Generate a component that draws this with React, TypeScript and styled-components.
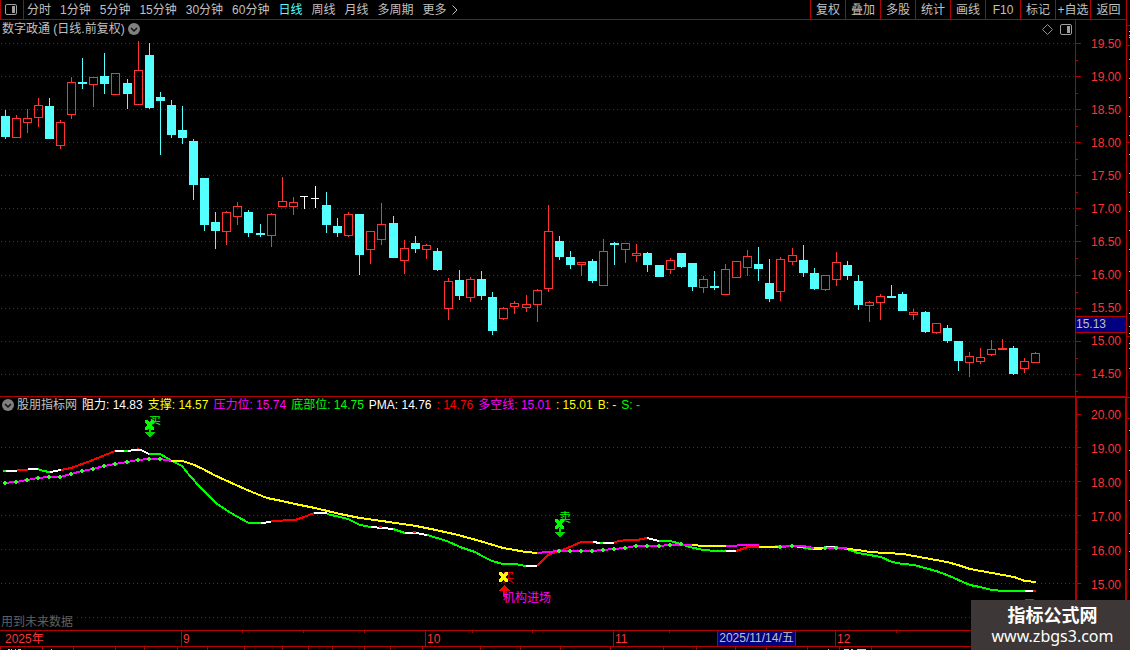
import React from "react";
import styled, { createGlobalStyle } from "styled-components";

const RED = "#b40000";
const HOT = "#ff3232";
const CYAN = "#54ffff";
const GREY = "#c0c0c0";
const LIME = "#00ff00";
const MAGENTA = "#ff00ff";
const YELLOW = "#ffff00";

const Global = createGlobalStyle`
  * { box-sizing: border-box; }
  body {
    margin: 0;
    background: #000;
    color: ${GREY};
    font: 12px/16px "Liberation Sans", "Noto Sans CJK SC", sans-serif;
    overflow: hidden;
  }
  button { font: inherit; color: inherit; background: none; border: 0; padding: 0; margin: 0; cursor: pointer; white-space: nowrap; }
  svg { display: block; }
`;

const Page = styled.div`
  position: relative;
  display: grid;
  grid-template-columns: minmax(0, 1fr) 4px;
  min-height: 100vh;
  background: #000;
`;

const Main = styled.main`
  display: flex;
  flex-direction: column;
  min-width: 0;
`;

const SideStrip = styled.aside`
  border-left: 1px solid ${RED};
  overflow: hidden;
`;

const Toolbar = styled.header`
  display: flex;
  height: 20px;
  border-bottom: 1px solid ${RED};
`;

const PanelToggle = styled.button`
  display: flex;
  align-items: center;
  width: 24px;
  padding-left: 4px;
  border-left: 1px solid ${RED};
  border-right: 1px solid ${RED};
`;

const Periods = styled.nav`
  display: flex;
  flex: 1;
  align-items: center;
  gap: 9px;
  padding-left: 3px;
`;

const Period = styled.button<{ $active?: boolean }>`
  display: flex;
  align-items: center;
  gap: 4px;
  height: 18px;
  color: ${(p) => (p.$active ? CYAN : GREY)};
`;

const Actions = styled.nav`
  display: flex;
`;

const Action = styled.button`
  width: 35px;
  height: 19px;
  border-left: 1px solid ${RED};

  &:last-child { width: 36px; }
`;

const Panel = styled.section`
  display: grid;
  grid-template-columns: minmax(0, 1fr) 51px;
  border-bottom: 1px solid ${RED};
`;

const Plot = styled.div`
  position: relative;
  min-width: 0;
  overflow: hidden;
`;

const TitleRow = styled.div`
  display: flex;
  align-items: center;
  gap: 3px;
  height: 20px;
  padding: 0 3px 2px 2px;
`;

const Title = styled.h1`
  margin: 0;
  font: inherit;
`;

const IconButton = styled.button`
  display: flex;
`;

const Tools = styled.div`
  display: flex;
  align-items: center;
  gap: 7px;
  margin-left: auto;
`;

const Legend = styled.div`
  display: flex;
  align-items: center;
  gap: 5px;
  height: 17px;
  padding: 0 0 2px 2px;
  white-space: nowrap;
`;

const LegendName = styled.span`
  margin-left: -2px;
`;

const LegendItem = styled.span<{ $color: string }>`
  color: ${(p) => p.$color};
`;

const Axis = styled.div<{ $thick?: boolean }>`
  position: relative;
  display: grid;
  border-left: ${(p) => (p.$thick ? 2 : 1)}px solid ${RED};
  border-right: ${(p) => (p.$thick ? 1 : 0)}px solid ${RED};
  border-top: ${(p) => (p.$thick ? 1 : 0)}px solid ${RED};
  color: ${HOT};

  > * { grid-area: 1 / 1; }
`;

const PriceLabels = styled.div`
  display: flex;
  flex-direction: column;
  padding: 7px 5px 5px 0;
  text-align: right;
`;

const PriceLabel = styled.span`
  display: flex;
  flex: 1;
  align-items: center;
  justify-content: flex-end;
`;

const LevelLabels = styled.div`
  display: grid;
  grid-auto-rows: 34px;
  padding-right: 4px;
  align-items: center;
  justify-items: end;
`;

const PriceTag = styled.div`
  position: absolute;
  top: 296px;
  left: 0;
  right: 0;
  height: 17px;
  border: solid ${RED};
  border-width: 1px 0;
  background: #000080;
  color: ${GREY};
  line-height: 15px;
`;

const Notice = styled.div`
  position: absolute;
  left: 0;
  bottom: 0;
  padding: 0 1px;
  background: #000;
  color: #606060;
`;

const TimeAxis = styled.div`
  position: relative;
  display: flex;
  height: 16px;
  border-bottom: 1px solid ${RED};
  color: ${HOT};
  line-height: 16px;
`;

const Month = styled.div<{ $w?: number }>`
  flex: ${(p) => (p.$w ? `0 0 ${p.$w}px` : "1")};
  padding-left: 1px;
  border-left: 1px solid ${RED};

  &:first-child { border-left: 0; padding-left: 5px; }
`;

const DateTag = styled.div`
  position: absolute;
  left: 717px;
  top: 0;
  width: 79px;
  height: 15px;
  border: solid ${RED};
  border-width: 0 1px;
  background: #000080;
  color: ${GREY};
  line-height: 15px;
  text-align: center;
  white-space: nowrap;
`;

const TickOverlay = styled.svg`
  position: absolute;
  left: 0;
  top: 0;
`;

const SiteBadge = styled.a`
  position: absolute;
  right: 0;
  bottom: 0;
  width: 159px;
  height: 50px;
  padding: 1px 0 0 4px;
  background: #3d3737;
  color: #fff;
  text-align: center;
  text-decoration: none;
`;

const BadgeName = styled.div`
  font: bold 18px/26px "Noto Sans CJK SC", sans-serif;
`;

const BadgeUrl = styled.div`
  font: 16px/18px "Noto Sans", "Open Sans", sans-serif;
`;

// left, high, body top, body bottom, low, kind (u = rise, d = fall)
type Candle = [number, number, number, number, number, "u" | "d"];
const candles: Candle[] = [
  [1, 110, 116, 137, 139, "d"], [12, 115, 118, 138, 138, "u"], [23, 109, 118, 123, 133, "u"],
  [34, 98, 105, 118, 127, "u"], [45, 98, 106, 139, 139, "d"], [56, 120, 122, 146, 149, "u"],
  [67, 77, 82, 115, 119, "u"], [78, 58, 82, 84, 89, "d"], [89, 77, 77, 85, 107, "u"],
  [100, 53, 76, 84, 94, "d"], [111, 73, 73, 95, 95, "u"], [123, 79, 83, 94, 109, "d"],
  [134, 41, 70, 105, 105, "u"], [145, 43, 55, 108, 109, "d"], [156, 92, 97, 101, 155, "d"],
  [167, 100, 105, 135, 138, "d"], [178, 106, 130, 138, 144, "d"], [189, 139, 141, 185, 200, "d"],
  [200, 178, 178, 225, 231, "d"], [211, 212, 222, 231, 249, "d"], [222, 211, 212, 232, 245, "u"],
  [233, 202, 206, 217, 225, "u"], [244, 210, 212, 233, 237, "d"], [256, 224, 233, 235, 237, "d"],
  [267, 213, 214, 236, 247, "u"], [278, 177, 201, 207, 207, "u"], [289, 197, 202, 207, 215, "u"],
  [322, 192, 205, 225, 233, "d"], [333, 218, 226, 233, 237, "d"], [344, 212, 214, 236, 237, "u"],
  [355, 214, 214, 255, 275, "d"], [366, 231, 231, 250, 264, "u"], [377, 203, 224, 240, 245, "u"],
  [389, 216, 223, 258, 258, "d"], [400, 240, 248, 261, 274, "u"], [411, 236, 243, 249, 253, "d"],
  [422, 244, 245, 250, 259, "u"], [433, 248, 251, 270, 271, "d"], [444, 278, 281, 309, 320, "u"],
  [455, 270, 280, 296, 300, "d"], [466, 277, 279, 298, 302, "u"], [477, 271, 279, 296, 300, "d"],
  [488, 292, 297, 331, 335, "d"], [499, 307, 308, 319, 320, "u"], [510, 301, 303, 307, 314, "u"],
  [522, 295, 304, 308, 312, "u"], [533, 289, 290, 305, 322, "u"], [544, 205, 231, 289, 292, "u"],
  [555, 236, 241, 257, 260, "d"], [566, 251, 257, 265, 269, "d"], [577, 262, 262, 265, 276, "u"],
  [588, 259, 261, 281, 283, "d"], [599, 239, 251, 286, 286, "u"], [610, 242, 243, 245, 265, "d"],
  [621, 243, 243, 250, 263, "u"], [632, 244, 253, 256, 262, "u"], [643, 252, 253, 265, 272, "d"],
  [655, 265, 265, 277, 277, "d"], [666, 258, 260, 270, 274, "u"], [677, 253, 253, 267, 268, "d"],
  [688, 263, 263, 287, 291, "d"], [699, 276, 279, 288, 293, "u"], [710, 271, 286, 288, 290, "d"],
  [721, 264, 269, 295, 295, "u"], [732, 261, 261, 278, 278, "u"], [743, 250, 256, 268, 276, "u"],
  [754, 247, 264, 269, 281, "d"], [765, 259, 283, 299, 302, "d"], [776, 257, 259, 292, 301, "u"],
  [788, 248, 255, 262, 265, "u"], [799, 245, 260, 273, 277, "d"], [810, 268, 273, 289, 290, "d"],
  [821, 275, 275, 290, 291, "u"], [832, 252, 262, 280, 286, "u"], [843, 261, 265, 276, 280, "d"],
  [854, 275, 281, 305, 310, "d"], [865, 301, 302, 306, 322, "u"], [876, 294, 296, 303, 320, "u"],
  [887, 285, 296, 298, 298, "d"], [898, 292, 294, 311, 311, "d"], [909, 309, 312, 315, 320, "u"],
  [921, 311, 312, 332, 333, "d"], [932, 323, 323, 333, 334, "u"], [943, 325, 328, 341, 343, "d"],
  [954, 341, 341, 361, 371, "d"], [965, 352, 356, 363, 377, "u"], [976, 348, 357, 362, 364, "u"],
  [987, 340, 349, 355, 356, "u"], [998, 339, 348, 350, 350, "u"], [1009, 346, 348, 374, 375, "d"],
  [1020, 358, 361, 369, 373, "u"], [1031, 352, 353, 363, 363, "u"],
];

const priceGrid = [43, 76, 109, 142, 175, 208, 241, 275, 308, 341, 374];
const levelGrid = [447, 481, 515, 549, 583, 617];
const prices = ["19.50", "19.00", "18.50", "18.00", "17.50", "17.00", "16.50", "16.00", "15.50", "15.00", "14.50"];
const levels = ["20.00", "19.00", "18.00", "17.00", "16.00", "15.00"];

const trend: [string, string][] = [
  [LIME, "3,471 6,471"], ["#fff", "6,471 17,471"], ["red", "17,470 28,470"], ["#fff", "28,469 38,469"],
  [LIME, "38,469 43,471 50,472"], ["#fff", "50,472 61,470"],
  ["red", "61,470 71,468 82,464 93,460 105,455 115,451"],
  ["#fff", "115,451 124,451"], [LIME, "124,451 128,451"], ["#fff", "128,451 134,450 141,450 149,454"],
  [LIME, "149,454 160,454 172,461 182,466 190,476 200,487 216,503 226,510 236,516 249,523 261,523"],
  ["#fff", "261,523 271,522"], ["red", "271,521 295,520 304,517 314,513"], ["#fff", "314,513 327,513"],
  [LIME, "327,514 340,517 348,519 360,525 371,527"], ["#fff", "371,527 393,529"], ["red", "379,527 382,527"],
  [LIME, "393,529 405,533"], ["#fff", "405,533 416,533 427,535"], ["red", "413,532 416,532"],
  [LIME, "427,535 447,541 460,547 475,552 482,556 492,561 503,564 515,564 526,566"],
  ["#fff", "526,566 537,566"],
  ["red", "537,566 548,555 559,551 570,547 581,542 593,542"],
  ["#fff", "593,542 600,543"], [LIME, "600,543 603,543"], ["#fff", "603,543 614,543"],
  ["red", "614,542 626,540 637,540 647,538"], ["#fff", "647,538 659,541"],
  [LIME, "659,541 670,541 681,544 690,547 703,550 716,551 726,551"], ["#fff", "726,551 736,551"],
  ["red", "736,551 748,547 759,547 770,547 780,546 792,546"], ["#fff", "797,547 803,547"],
  [LIME, "803,548 813,549"], ["#fff", "813,549 820,549 826,547 835,547"],
  [LIME, "835,547 847,549 858,553 881,557 892,562 903,564 914,565 936,571 947,575 970,585 980,587 992,590 1003,591 1025,591"],
  ["#fff", "1025,591 1033,591"], ["red", "1033,591 1036,591"],
];

const longLine: [string, string][] = [
  [MAGENTA, "3,483 16,482 27,480 38,478 49,477 60,477 71,474 82,471 93,469 104,466 115,464 127,462 138,460 149,459 160,459 172,461"],
  [YELLOW, "171,461 182,461 192,464 203,469 214,475 225,480 236,485 252,492 267,498 282,501 295,504 315,508 340,514 360,518 382,521 416,526 436,530 458,535 480,541 503,548 526,552 537,553"],
  [MAGENTA, "537,553 548,552 559,551 592,551 603,550 614,549 625,548 636,546 659,546 670,545 692,545"],
  [YELLOW, "692,545 704,546 726,546"], [MAGENTA, "726,546 748,545 759,545"], [YELLOW, "759,547 780,547"],
  [MAGENTA, "780,547 792,546 803,546 814,548"], [YELLOW, "814,548 825,548"], [MAGENTA, "825,548 847,548"],
  [YELLOW, "847,549 858,550 870,552 903,554 914,556 947,562 958,565 970,569 992,573 1014,577 1025,581 1036,582"],
];

const dots: [number, number][] = [
  [5, 483], [16, 482], [27, 480], [38, 478], [49, 477], [60, 477], [71, 474], [82, 471], [93, 469],
  [104, 466], [115, 464], [127, 462], [138, 460], [149, 459], [160, 459], [559, 551], [570, 551],
  [581, 551], [592, 551], [603, 550], [614, 549], [625, 548], [636, 546], [647, 546], [659, 546],
  [670, 545], [681, 544], [780, 547], [792, 546], [825, 548], [836, 548],
];

const periods = ["分时", "1分钟", "5分钟", "15分钟", "30分钟", "60分钟", "日线", "周线", "月线", "多周期"];
const actions = ["复权", "叠加", "多股", "统计", "画线", "F10", "标记", "+自选", "返回"];
const legend: [string, string][] = [
  ["阻力: 14.83", "#fff"], ["支撑: 14.57", YELLOW], ["压力位: 15.74", MAGENTA], ["底部位: 14.75", LIME],
  ["PMA: 14.76", "#fff"], [": 14.76", "red"], ["多空线: 15.01", MAGENTA], [": 15.01", YELLOW],
  ["B: -", YELLOW], ["S: -", LIME],
];

const SidebarIcon = () => (
  <svg width="12" height="11" viewBox="0 0 12 11" aria-hidden="true">
    <rect x="0.5" y="0.5" width="11" height="10" rx="1.5" fill="none" stroke="#a0a0a0" />
    <rect x="7" y="2" width="3" height="7" fill="#a0a0a0" />
  </svg>
);

const RoundChevron = () => (
  <svg width="12" height="12" viewBox="0 0 12 12" aria-hidden="true">
    <circle cx="6" cy="6" r="6" fill="#808080" />
    <path d="M3 5l3 3 3-3" fill="none" stroke="#111" strokeWidth="1.5" />
  </svg>
);

const GridLines = ({ ys }: { ys: number[] }) => (
  <g stroke={RED} strokeDasharray="1 3">
    {ys.map((y) => <line key={y} x1="1" x2="100%" y1={y + 0.5} y2={y + 0.5} />)}
  </g>
);

const CandleShape = ({ c: [x, high, top, bottom, low, kind] }: { c: Candle }) => {
  if (kind === "d")
    return (
      <g fill={CYAN}>
        <rect x={x + 4} y={high} width="1" height={low - high} />
        <rect x={x} y={top} width="9" height={bottom - top} />
      </g>
    );
  return (
    <g fill={HOT}>
      <rect x={x + 4} y={high} width="1" height={top - high} />
      <rect x={x + 4} y={bottom} width="1" height={low - bottom} />
      <rect x={x + 0.5} y={top + 0.5} width="8" height={bottom - top - 1} fill="none" stroke={HOT} />
    </g>
  );
};

const Cross = ({ x, y, color }: { x: number; y: number; color: string }) => (
  <g transform={`translate(${x} ${y})`} fill={color}>
    <path d="M0 0h3v1h1v1h1v-1h1v-1h3v3h-1v1h-1v2h1v1h1v3h-3v-1h-1v-1h-1v1h-1v1h-3v-3h1v-1h1v-2h-1v-1h-1z" />
  </g>
);

const DownArrow = ({ x, y }: { x: number; y: number }) => (
  <path d={`M${x + 4} ${y - 4}h2v4h4v1h-1v1h-1v1h-1v1h-1v1h-2v-1h-1v-1h-1v-1h-1v-1h-1v-1h4z`} fill="#00d800" />
);

export default function App() {
  return (
    <>
      <Global />
      <Page>
        <Main>
          <Toolbar>
            <PanelToggle aria-label="侧栏"><SidebarIcon /></PanelToggle>
            <Periods>
              {periods.map((p) => <Period key={p} $active={p === "日线"}>{p}</Period>)}
              <Period>
                更多
                <svg width="7" height="10" viewBox="0 0 7 10" aria-hidden="true">
                  <path d="M1.500 .5l4.500 4.500-4.500 4.500" fill="none" stroke={GREY} />
                </svg>
              </Period>
            </Periods>
            <Actions>
              {actions.map((a) => <Action key={a}>{a}</Action>)}
            </Actions>
          </Toolbar>

          <Panel>
            <Plot>
              <TitleRow>
                <Title>数字政通 (日线.前复权)</Title>
                <IconButton aria-label="展开"><RoundChevron /></IconButton>
                <Tools>
                  <IconButton aria-label="标记点">
                    <svg width="11" height="11" viewBox="0 0 11 11">
                      <path d="M5.500 .5l5 5-5 5-5-5z" fill="none" stroke="#909090" />
                    </svg>
                  </IconButton>
                  <IconButton aria-label="右侧栏"><SidebarIcon /></IconButton>
                </Tools>
              </TitleRow>
              <svg width="100%" height="356" shapeRendering="crispEdges" role="img" aria-label="日线">
                <g transform="translate(0 -40)">
                  <GridLines ys={priceGrid} />
                  {candles.map((c) => <CandleShape key={c[0]} c={c} />)}
                  <path d="M300 196h8v1h-3v12h-1v-12h-4zM315 186h1v12h3v1h-3v9h-1v-9h-4v-1h4z" fill="#fff" />
                </g>
              </svg>
            </Plot>
            <Axis>
              <svg width="8" height="376" shapeRendering="crispEdges" aria-hidden="true">
                {priceGrid.map((y) => (
                  <g key={y} fill={RED}>
                    <rect x="0" y={y - 20} width="5" height="1" />
                    <rect x="0" y={y - 3} width="2" height="1" />
                  </g>
                ))}
              </svg>
              <PriceLabels>{prices.map((p) => <PriceLabel key={p}>{p}</PriceLabel>)}</PriceLabels>
              <PriceTag>15.13</PriceTag>
            </Axis>
          </Panel>

          <Panel>
            <Plot>
              <Legend>
                <IconButton aria-label="展开指标"><RoundChevron /></IconButton>
                <LegendName>股朋指标网</LegendName>
                {legend.map(([text, color], i) => <LegendItem key={i} $color={color}>{text}</LegendItem>)}
              </Legend>
              <svg width="100%" height="216" shapeRendering="crispEdges" role="img" aria-label="指标">
                <g transform="translate(0 -414)">
                  <GridLines ys={levelGrid} />
                  <g fill="none" strokeWidth="2" strokeLinejoin="round">
                    {trend.map(([color, points], i) => <polyline key={i} points={points} stroke={color} />)}
                    {longLine.map(([color, points], i) => <polyline key={i} points={points} stroke={color} />)}
                  </g>
                  <g fill="#32ff32">
                    {dots.map(([x, y]) => (
                      <path key={x} d={`M${x - 1} ${y - 2}h2v1h1v2h-1v1h-2v-1h-1v-2h1z`} />
                    ))}
                  </g>
                  <rect x="137" y="448" width="2" height="1" fill="red" />
                  <text x="149" y="424" fontSize="12" fill={LIME}>卖</text>
                  <rect x="148" y="414" width="14" height="2" fill="#000" />
                  <Cross x={145} y={420} color={LIME} />
                  <DownArrow x={145} y={432} />
                  <text x="559" y="522" fontSize="12" fill={LIME}>卖</text>
                  <Cross x={555} y={519} color={LIME} />
                  <DownArrow x={555} y={532} />
                  <text x="502" y="582" fontSize="12" fill="red">买</text>
                  <Cross x={499} y={572} color={YELLOW} />
                  <path d="M503 585h2v1h1v1h1v1h1v1h1v1h1v1h-5v6h-2v-6h-4v-1h1v-1h1v-1h1v-1h1v-1h1z" fill="red" />
                  <text x="503" y="602" fontSize="12" fill={MAGENTA}>机构进场</text>
                  <rect x="1025" y="599" width="9" height="1" fill="red" />
                </g>
              </svg>
              <Notice>用到未来数据</Notice>
            </Plot>
            <Axis $thick>
              <svg width="8" height="230" shapeRendering="crispEdges" aria-hidden="true">
                {[414, ...levelGrid].map((y) => (
                  <g key={y} fill={RED}>
                    <rect x="0" y={y - 398} width="4" height="1" />
                    <rect x="0" y={y - 381} width="1" height="1" />
                  </g>
                ))}
              </svg>
              <LevelLabels>{levels.map((l) => <span key={l}>{l}</span>)}</LevelLabels>
            </Axis>
          </Panel>

          <TimeAxis>
            <Month $w={181}>2025年</Month>
            <Month $w={244}>9</Month>
            <Month $w={188}>10</Month>
            <Month $w={222}>11</Month>
            <Month>12</Month>
            <TickOverlay width="100%" height="2" aria-hidden="true">
              {[242, 303, 364, 472, 532, 669, 896].map((x) => (
                <rect key={x} x={x} y="0" width="1" height="2" fill={RED} />
              ))}
            </TickOverlay>
            <DateTag>2025/11/14/五</DateTag>
          </TimeAxis>
          <svg width="100%" height="3" shapeRendering="crispEdges" aria-hidden="true">
            {[0, 42, 73, 115, 144, 177, 207, 244, 282, 308, 332, 364, 390, 422, 480, 520, 560, 610, 663, 696, 735, 766, 807, 839, 871].map((x) => (
              <rect key={x} x={x} y="0" width="1" height="3" fill={RED} />
            ))}
            <path d="M8 2h2v1h-2zM11 2h1v1h-1zM15 2h1v1h-1zM18 2h3v1h-3zM51 2h1v1h-1zM828 2h1v1h-1z" fill={GREY} />
            <path d="M844 2h5v1h-5zM851 2h2v1h-2zM857 2h9v1h-9z" fill={CYAN} />
          </svg>
        </Main>

        <SideStrip>
          <svg width="3" height="650" shapeRendering="crispEdges" aria-hidden="true">
            {[25, 45, 142, 336, 397, 418].map((y) => <rect key={y} x="0" y={y} width="3" height="1" fill={RED} />)}
            {[31, 35, 37, 59, 78, 97, 116, 135, 154, 173, 192, 211, 230, 249, 271, 290, 313, 326, 333, 343, 348, 368, 430, 450, 470, 500, 533, 551, 569].map((y) => (
              <rect key={y} x="2" y={y} width="1" height="1" fill={GREY} />
            ))}
          </svg>
        </SideStrip>

        <SiteBadge href="#">
          <BadgeName>指标公式网</BadgeName>
          <BadgeUrl>www.zbgs3.com</BadgeUrl>
        </SiteBadge>
      </Page>
    </>
  );
}
